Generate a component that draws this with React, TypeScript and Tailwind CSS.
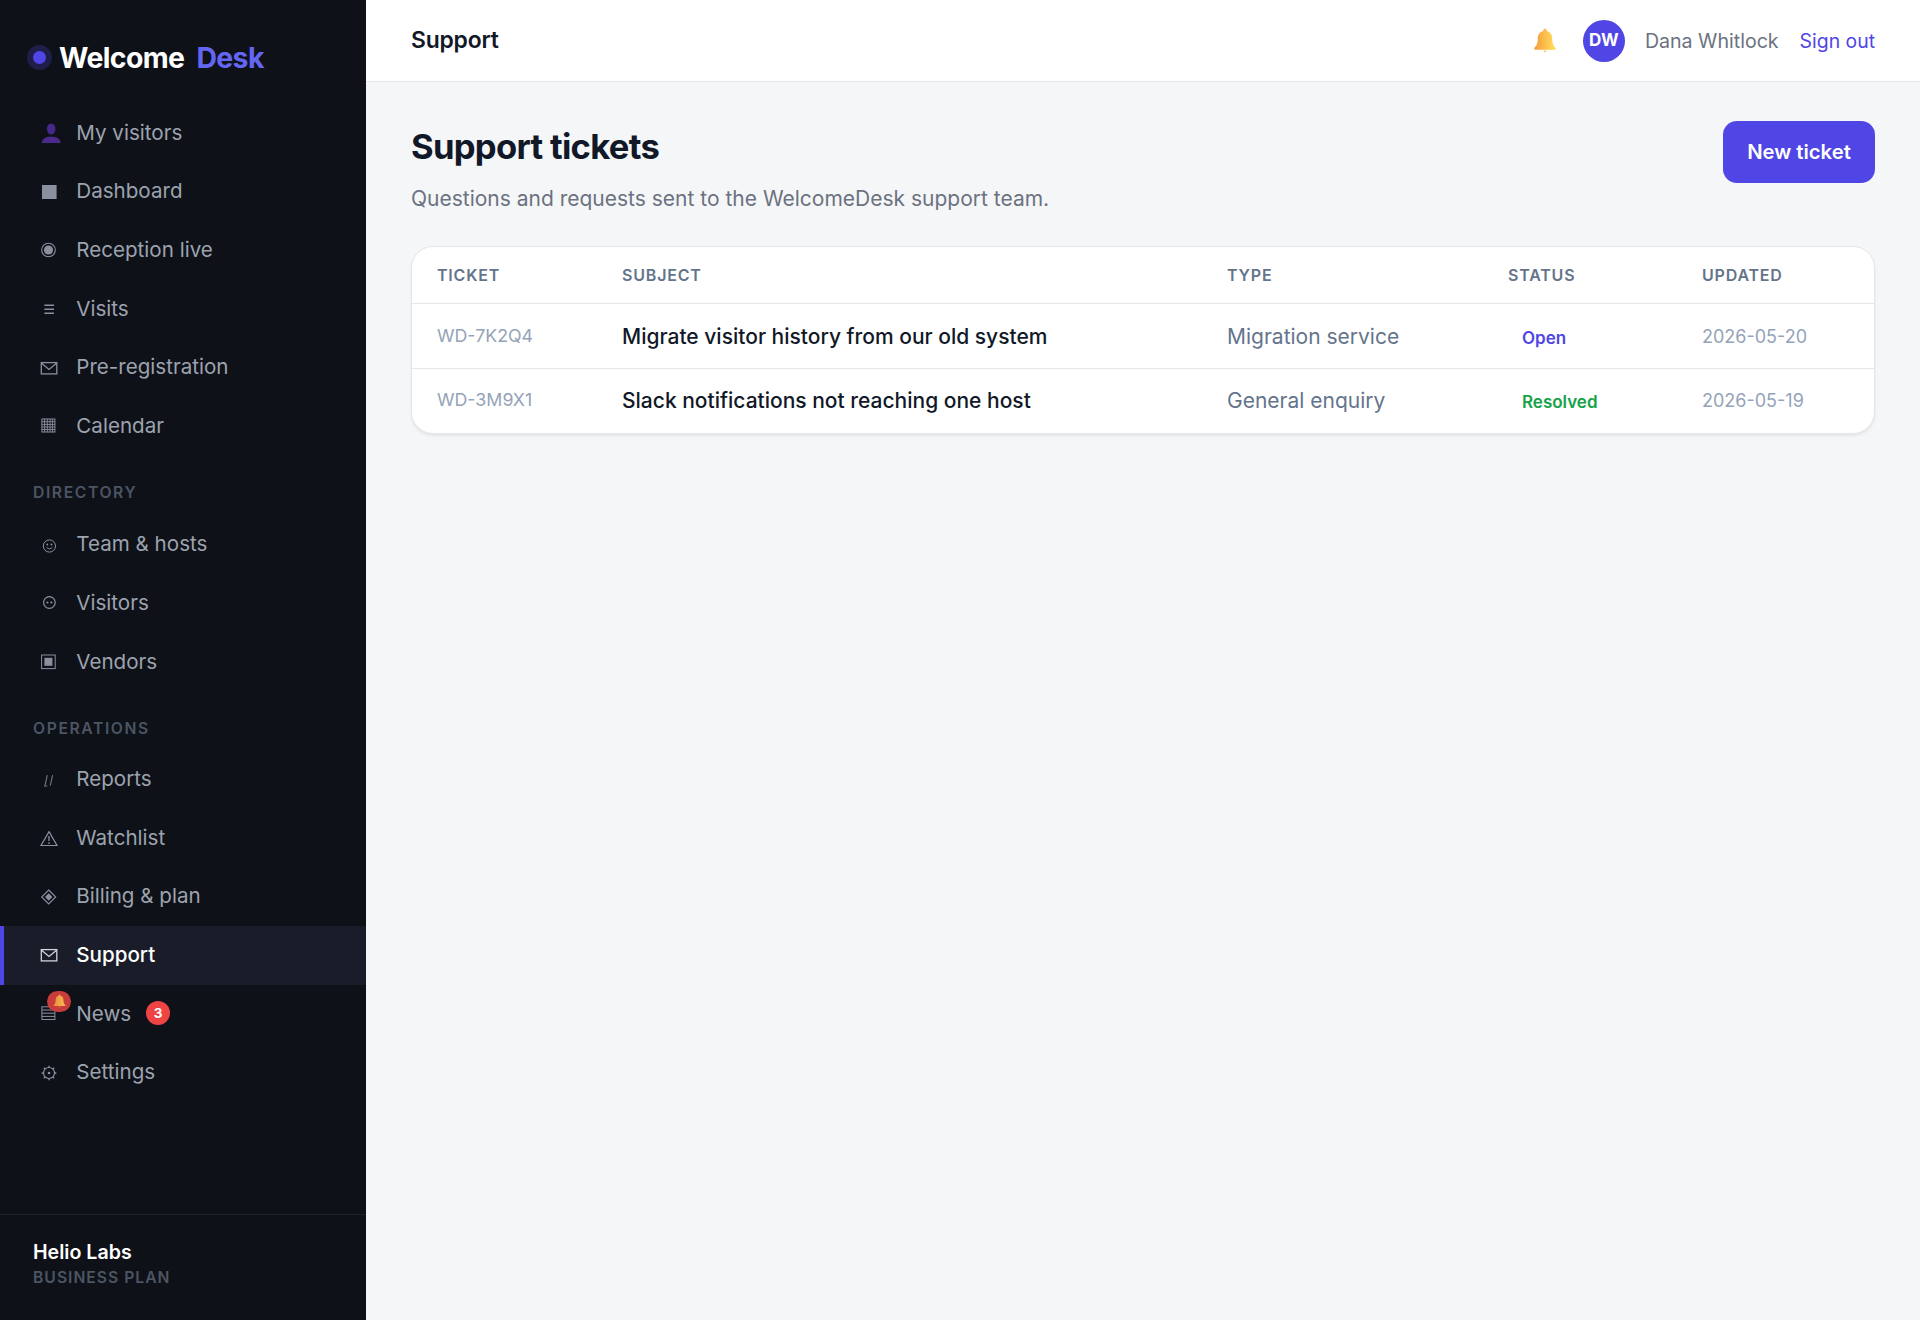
import type { ReactNode } from "react";

function Svg({ children, className = "" }: { children: ReactNode; className?: string }) {
  return (
    <svg viewBox="0 0 20 20" width="20" height="20" fill="none" stroke="currentColor" className={`shrink-0 overflow-visible ${className}`}>
      {children}
    </svg>
  );
}

function PersonIcon() {
  return (
    <Svg>
      <ellipse cx="12.2" cy="6" rx="4.3" ry="5.6" fill="#46288a" stroke="none" />
      <path d="M2.800 20c.3-3.600 2-4.800 6.400-6.200h6c4.400 1.400 6.100 2.600 6.500 6.200z" fill="#4c2a8c" stroke="none" />
    </Svg>
  );
}

function EnvelopeIcon() {
  return (
    <Svg>
      <rect x="2.300" y="4.600" width="15.500" height="11.300" strokeWidth="1.300" />
      <path d="M2.600 5.200 10 11.400l7.500-6.200" strokeWidth="1.300" />
    </Svg>
  );
}

const icons: Record<string, ReactNode> = {
  person: <PersonIcon />,
  square: (
    <Svg>
      <rect x="3" y="3" width="14.600" height="14" fill="currentColor" stroke="none" />
    </Svg>
  ),
  target: (
    <Svg>
      <circle cx="9.500" cy="10" r="6.800" strokeWidth="1.100" />
      <circle cx="9.500" cy="10" r="4.600" fill="currentColor" stroke="none" />
    </Svg>
  ),
  lines: (
    <Svg>
      <path d="M5.400 6.300H15M5.400 10.300H15M5.400 14.300H15" strokeWidth="1.500" />
    </Svg>
  ),
  envelope: <EnvelopeIcon />,
  grid: (
    <Svg>
      <rect x="2.900" y="3" width="13" height="13" strokeWidth="1" />
      <path d="M5.600 3v13M8.300 3v13M11 3v13M13.400 3v13M2.900 5.700h13M2.900 8.400h13M2.900 11h13M2.900 13.500h13" strokeWidth="0.900" />
    </Svg>
  ),
  smile: (
    <Svg>
      <circle cx="10.400" cy="11" r="6.100" strokeWidth="1" />
      <circle cx="8.300" cy="9.500" r="0.900" fill="currentColor" stroke="none" />
      <circle cx="12.500" cy="9.500" r="0.900" fill="currentColor" stroke="none" />
      <path d="M7.500 12.600q2.900 2.800 5.800 0" strokeWidth="0.900" />
    </Svg>
  ),
  face: (
    <Svg>
      <circle cx="10.400" cy="9.500" r="5.800" strokeWidth="1.200" />
      <circle cx="8.400" cy="9.500" r="1.100" fill="currentColor" stroke="none" />
      <circle cx="12.400" cy="9.500" r="1.100" fill="currentColor" stroke="none" />
    </Svg>
  ),
  box: (
    <Svg>
      <rect x="2.600" y="3" width="13.600" height="13.600" strokeWidth="1" />
      <rect x="5.400" y="5.800" width="8" height="8" fill="currentColor" stroke="none" />
    </Svg>
  ),
  slashes: (
    <Svg>
      <path d="M8.300 5.200 6 15.500M13.600 5.200l-2.300 10.300M5 16h3.200" strokeWidth="0.900" />
    </Svg>
  ),
  warning: (
    <Svg>
      <path d="M10 3.600 18 17.500H2z" strokeWidth="1.200" />
      <path d="M10 8v5M10 14.300v1.600" strokeWidth="1.300" />
    </Svg>
  ),
  diamond: (
    <Svg>
      <path d="M9.700 3 16.700 10l-7 7-7-7z" strokeWidth="1.100" />
      <path d="M9.700 6.300 13.400 10l-3.700 3.700L6 10z" fill="currentColor" stroke="none" />
    </Svg>
  ),
  list: (
    <Svg>
      <rect x="2.900" y="2.800" width="13" height="12.700" strokeWidth="1" />
      <path d="M2.900 6h13M2.900 9.200h13M2.900 12.400h13" strokeWidth="1" />
    </Svg>
  ),
  gear: (
    <Svg>
      <circle cx="10" cy="10" r="5.500" strokeWidth="1.200" />
      <circle cx="10" cy="10" r="1.300" fill="currentColor" stroke="none" />
      <path d="M10 2.700v1.800M10 15.500v1.800M2.700 10h1.800M15.500 10h1.800M4.800 4.800l1.300 1.300M13.900 13.900l1.300 1.300M4.800 15.200l1.300-1.300M13.900 6.100l1.300-1.300" strokeWidth="1.300" />
    </Svg>
  ),
};

function Bell({ id, className }: { id: string; className: string }) {
  return (
    <svg viewBox="0 0 24 25" className={className}>
      <defs>
        <linearGradient id={id} x1="0" y1="0" x2="1" y2="0">
          <stop offset="0" stopColor="#f59a3c" />
          <stop offset="0.55" stopColor="#fdc24f" />
          <stop offset="1" stopColor="#ffe05c" />
        </linearGradient>
      </defs>
      <path
        fill={`url(#${id})`}
        d="M12 .5a1.700 1.700 0 0 1 1.700 1.700v.7c3.700.9 5.500 4 5.500 7.600 0 5.400 1.500 7.500 3.300 9.300.7.700.3 1.900-.8 1.900H2.300c-1.100 0-1.500-1.200-.8-1.900C3.300 18 4.800 15.900 4.800 10.500c0-3.600 1.800-6.700 5.500-7.600v-.7A1.700 1.700 0 0 1 12 .5zM10.300 22.500h3.400L12 24.500z"
      />
    </svg>
  );
}

const mainNav = [
  { icon: "person", label: "My visitors" },
  { icon: "square", label: "Dashboard" },
  { icon: "target", label: "Reception live" },
  { icon: "lines", label: "Visits" },
  { icon: "envelope", label: "Pre-registration" },
  { icon: "grid", label: "Calendar" },
];

const directoryNav = [
  { icon: "smile", label: "Team & hosts" },
  { icon: "face", label: "Visitors" },
  { icon: "box", label: "Vendors" },
];

const operationsNav = [
  { icon: "slashes", label: "Reports" },
  { icon: "warning", label: "Watchlist" },
  { icon: "diamond", label: "Billing & plan" },
  { icon: "envelope", label: "Support", active: true },
  { icon: "list", label: "News", badge: "3" },
  { icon: "gear", label: "Settings" },
];

const tickets = [
  {
    id: "WD-7K2Q4",
    subject: "Migrate visitor history from our old system",
    type: "Migration service",
    status: "Open",
    statusClass: "text-[#4f46e5]",
    updated: "2026-05-20",
  },
  {
    id: "WD-3M9X1",
    subject: "Slack notifications not reaching one host",
    type: "General enquiry",
    status: "Resolved",
    statusClass: "text-[#16a34a]",
    updated: "2026-05-19",
  },
];

const gridCols = "grid grid-cols-[185px_605px_281px_194px_1fr] items-center";

type Item = { icon: string; label: string; active?: boolean; badge?: string };

function NavItem({ item }: { item: Item }) {
  return (
    <a
      href="#"
      className={`relative flex h-[58.6px] items-center border-l-[4.7px] pl-[34.6px] text-[20.6px] ${
        item.active
          ? "border-[#4f46e5] bg-[#1a1d29] font-medium text-white"
          : "border-transparent text-[#9ca3af]"
      }`}
    >
      <span className={`mr-[17.7px] flex ${item.active ? "text-[#d1d5db]" : "text-[#8b90a0]"}`}>{icons[item.icon]}</span>
      {item.label}
      {item.badge && (
        <>
          <span className="absolute left-[43.3px] top-[6px] flex h-[21px] w-[24px] items-center justify-center rounded-full bg-[#c93c3c]">
            <Bell id="bell-news" className="h-[14px] w-[13px] opacity-80" />
          </span>
          <span className="-mt-[2px] ml-[15px] flex h-[24px] w-[24px] items-center justify-center rounded-full bg-[#ef4444] text-[13.5px] font-bold text-white">
            {item.badge}
          </span>
        </>
      )}
    </a>
  );
}

function SectionLabel({ children, className }: { children: string; className: string }) {
  return (
    <div className={`flex items-end pl-[33px] text-[15.7px] leading-[18px] font-semibold tracking-[1.600px] text-[#4b5563] ${className}`}>
      {children}
    </div>
  );
}

export default function App() {
  return (
    <div className="flex min-h-[1320px] bg-[#f5f6f8] font-['Inter',sans-serif]">
      <aside className="flex w-[366px] shrink-0 flex-col bg-[#0f1118]">
        <div className="flex h-[104px] items-center pl-[27px] pt-[11px]">
          <span className="mr-[7px] flex h-[25px] w-[25px] items-center justify-center rounded-full bg-[#4f46e5]/25">
            <span className="h-[13.500px] w-[13.500px] rounded-full bg-[#4f46e5]" />
          </span>
          <span className="text-[28.400px] leading-[38px] font-bold tracking-[-0.600px] text-white">Welcome</span>
          <span className="ml-[12px] text-[28.400px] leading-[38px] font-bold tracking-[-0.600px] text-[#6366f1]">Desk</span>
        </div>

        <nav className="flex-1">
          {mainNav.map((item) => (
            <NavItem key={item.label} item={item} />
          ))}
          <SectionLabel className="h-[60px] pb-[14px]">DIRECTORY</SectionLabel>
          {directoryNav.map((item) => (
            <NavItem key={item.label} item={item} />
          ))}
          <SectionLabel className="h-[59px] pb-[12px]">OPERATIONS</SectionLabel>
          {operationsNav.map((item) => (
            <NavItem key={item.label} item={item} />
          ))}
        </nav>

        <div className="h-[106px] border-t border-[#1e2029] pl-[33px] pt-[24px]">
          <div className="text-[19.600px] leading-[26px] font-semibold text-white">Helio Labs</div>
          <div className="mt-[2px] text-[15.700px] leading-[22px] font-semibold tracking-[1px] text-[#4b5563]">BUSINESS PLAN</div>
        </div>
      </aside>

      <div className="flex min-w-0 flex-1 flex-col">
        <header className="flex h-[82px] items-center justify-between border-b border-[#e5e7eb] bg-white px-[45px]">
          <div className="text-[22.900px] font-semibold tracking-[-0.200px] text-[#111827]">Support</div>
          <div className="flex items-center">
            <Bell id="bell-header" className="mr-[26px] h-[25px] w-[24px]" />
            <span className="mr-[20px] flex h-[42px] w-[42px] items-center justify-center rounded-full bg-[#4f46e5] text-[17px] font-bold text-white">
              DW
            </span>
            <span className="mr-[21px] mt-[2px] text-[19.600px] text-[#6b7280]">Dana Whitlock</span>
            <a href="#" className="mt-[2px] text-[19.400px] text-[#4f46e5]">
              Sign out
            </a>
          </div>
        </header>

        <main className="px-[45px] pt-[39px]">
          <div className="flex items-start justify-between">
            <div>
              <h1 className="text-[34.600px] leading-[51px] font-bold tracking-[-0.700px] text-[#111827]">Support tickets</h1>
              <p className="mt-[11.500px] text-[21px] leading-[30px] text-[#6b7280]">
                Questions and requests sent to the WelcomeDesk support team.
              </p>
            </div>
            <button
              type="button"
              className="h-[62px] w-[152px] rounded-[14px] bg-[#4f46e5] pt-[1px] text-[20.300px] font-semibold text-white"
            >
              New ticket
            </button>
          </div>

          <div className="mt-[32px] overflow-hidden rounded-[22px] border border-[#e5e7eb] bg-white shadow-[0_2px_3px_rgba(0,0,0,0.07)]">
            <div className={`${gridCols} h-[57px] border-b border-[#e5e7eb] px-[25px] text-[16px] font-semibold tracking-[0.800px] text-[#64748b]`}>
              <div>TICKET</div>
              <div>SUBJECT</div>
              <div>TYPE</div>
              <div>STATUS</div>
              <div>UPDATED</div>
            </div>
            {tickets.map((t, i) => (
              <div
                key={t.id}
                className={`${gridCols} h-[64.500px] px-[25px] ${i > 0 ? "border-t border-[#e5e7eb]" : "pt-[2px]"}`}
              >
                <div className="-mt-[1px] text-[17.800px] text-[#94a3b8]">{t.id}</div>
                <div className="text-[21px] font-medium text-[#111827]">{t.subject}</div>
                <div className="text-[21px] text-[#64748b]">{t.type}</div>
                <div className="mt-[3px]">
                  <span className={`ml-[14px] text-[17px] font-semibold ${t.statusClass}`}>{t.status}</span>
                </div>
                <div className="-mt-[1px] text-[18px] text-[#94a3b8]">{t.updated}</div>
              </div>
            ))}
          </div>
        </main>
      </div>
    </div>
  );
}
